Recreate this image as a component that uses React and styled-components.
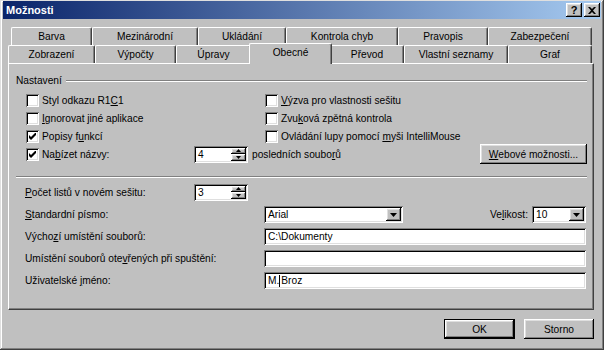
import React from "react";
import styled, { createGlobalStyle, css } from "styled-components";

const GlobalStyle = createGlobalStyle`
  body {
    margin: 0;
    background: #c0c0c0;
    font-family: "Liberation Sans", Arial, sans-serif;
    font-size: 10.2px;
    color: #000;
  }
`;

const raised = css`
  background: #c0c0c0;
  box-shadow: inset -1px -1px #000, inset 1px 1px #fff, inset -2px -2px #808080,
    inset 2px 2px #dfdfdf;
`;

const sunken = css`
  background: #fff;
  box-shadow: inset 1px 1px #808080, inset -1px -1px #fff, inset 2px 2px #000,
    inset -2px -2px #dfdfdf;
`;

const etched = css`
  height: 0;
  border-top: 1px solid #808080;
  border-bottom: 1px solid #fff;
`;

const Window = styled.div`
  width: 604px;
  height: 350px;
  box-sizing: border-box;
  padding: 1px 3px 3px;
  background: #c0c0c0;
  box-shadow: inset -1px -1px #404040, inset 1px 1px #dfdfdf, inset -2px -2px #808080,
    inset 2px 2px #fff;
  display: flex;
  flex-direction: column;
`;

const TitleBar = styled.div`
  height: 18px;
  display: flex;
  align-items: center;
  justify-content: space-between;
  padding: 0 1px 0 3px;
  background: linear-gradient(to right, #0a246a, #a6caf0);
`;

const TitleText = styled.span`
  color: #fff;
  font-weight: bold;
  font-size: 11px;
`;

const CaptionButtons = styled.div`
  display: flex;
  gap: 2px;
`;

const CaptionButton = styled.div`
  ${raised};
  width: 16px;
  height: 14px;
  display: flex;
  align-items: center;
  justify-content: center;
  font-weight: bold;
  font-size: 11px;
  line-height: 1;
`;

const Body = styled.div`
  padding: 8px 7px 0 5px;
`;

const TabRow = styled.div`
  display: flex;
  height: 18px;
  margin-left: ${(p) => p.$indent || 0}px;
`;

const Tab = styled.div`
  width: ${(p) => p.$w}px;
  height: 18px;
  box-sizing: border-box;
  display: flex;
  align-items: center;
  justify-content: center;
  border-top: 1px solid #fff;
  border-left: 1px solid #fff;
  border-right: 1px solid #404040;
  box-shadow: inset -1px 0 #808080;
  border-radius: 2px 2px 0 0;
  background: #c0c0c0;
  white-space: nowrap;
  ${(p) =>
    p.$active &&
    css`
      width: ${p.$w + 4}px;
      height: 21px;
      margin: -2px -2px 0;
      padding-bottom: 3px;
      position: relative;
      z-index: 1;
    `}
`;

const Panel = styled.div`
  height: 247px;
  box-sizing: border-box;
  border-top: 1px solid #fff;
  border-left: 1px solid #fff;
  border-right: 1px solid #404040;
  border-bottom: 1px solid #404040;
  box-shadow: inset -1px -1px #808080;
  padding: 10px 6px 0 7px;
`;

const GroupHeader = styled.div`
  display: flex;
  align-items: center;
  height: 13px;
  gap: 4px;
`;

const GroupLine = styled.div`
  ${etched};
  flex: 1;
`;

const Rule = styled.div`
  ${etched};
  margin-top: 13px;
`;

const CheckGrid = styled.div`
  display: grid;
  grid-template-columns: 239px 1fr;
  grid-auto-rows: 18px;
  margin-top: 4px;
  padding-left: 10px;
`;

const CheckItem = styled.div`
  display: flex;
  align-items: center;
  gap: 3px;
  white-space: nowrap;
  ${(p) => p.$w && `width: ${p.$w}px; flex: none;`}
`;

const Box = styled.div`
  ${sunken};
  width: 13px;
  height: 13px;
  flex: none;
  display: flex;
  align-items: center;
  justify-content: center;
`;

const WideRow = styled.div`
  grid-column: 1 / -1;
  display: flex;
  align-items: center;
`;

const Spacer = styled.div`
  flex: 1;
`;

const Caption = styled.span`
  margin-left: ${(p) => p.$ml || 0}px;
  margin-right: ${(p) => p.$mr || 0}px;
  white-space: nowrap;
`;

const Key = styled.u`
  text-decoration: underline;
`;

const Button = styled.div`
  ${raised};
  width: ${(p) => p.$w}px;
  height: 20px;
  box-sizing: border-box;
  display: flex;
  align-items: center;
  justify-content: center;
  flex: none;
  ${(p) =>
    p.$default &&
    css`
      box-shadow: inset 0 0 0 1px #000, inset -2px -2px #000, inset 2px 2px #fff,
        inset -3px -3px #808080, inset 3px 3px #dfdfdf;
    `}
`;

const Field = styled.div`
  ${sunken};
  width: ${(p) => (p.$w ? `${p.$w}px` : "auto")};
  height: 17px;
  box-sizing: border-box;
  display: flex;
  align-items: center;
  padding-left: 4px;
  flex: none;
  white-space: nowrap;
  overflow: hidden;
`;

const FieldText = styled.span`
  flex: 1;
`;

const DropButton = styled.div`
  ${raised};
  width: 15px;
  height: 13px;
  margin-right: 2px;
  display: flex;
  align-items: center;
  justify-content: center;
  flex: none;
`;

const SpinButtons = styled.div`
  display: flex;
  flex-direction: column;
  margin-right: 2px;
  flex: none;
`;

const SpinButton = styled.div`
  ${raised};
  width: 15px;
  height: 6.5px;
  display: flex;
  align-items: center;
  justify-content: center;
`;

const Form = styled.div`
  padding: 0 1px 0 9px;
  margin-top: 5px;
`;

const FormRow = styled.div`
  display: grid;
  grid-template-columns: ${(p) => p.$label || 239}px 1fr;
  align-items: center;
  height: ${(p) => p.$h || 17}px;
  margin-top: ${(p) => p.$mt || 0}px;
`;

const FieldGroup = styled.div`
  display: flex;
  align-items: center;
`;

const Caret = styled.span`
  display: inline-block;
  width: 1px;
  height: 12px;
  background: #000;
  vertical-align: middle;
  margin: 0 1px 0 0;
`;

const Footer = styled.div`
  display: flex;
  justify-content: flex-end;
  gap: 9px;
  padding-top: 9px;
`;

const Check = () => (
  <svg width="7" height="7" viewBox="0 0 7 7">
    <path d="M0 2 V5 L2 7 L7 2 V-1 L2 4 Z" fill="#000" />
  </svg>
);

const Down = () => (
  <svg width="7" height="4" viewBox="0 0 7 4">
    <path d="M0 0 H7 L3.5 4 Z" fill="#000" />
  </svg>
);

const Tri = ({ up }) => (
  <svg width="5" height="3" viewBox="0 0 5 3">
    <path d={up ? "M0 3 H5 L2.5 0 Z" : "M0 0 H5 L2.5 3 Z"} fill="#000" />
  </svg>
);

function CheckBox({ checked, children, w }) {
  return (
    <CheckItem $w={w}>
      <Box>{checked && <Check />}</Box>
      <span>{children}</span>
    </CheckItem>
  );
}

function Spin({ value }) {
  return (
    <Field $w={54}>
      <FieldText>{value}</FieldText>
      <SpinButtons>
        <SpinButton>
          <Tri up />
        </SpinButton>
        <SpinButton>
          <Tri />
        </SpinButton>
      </SpinButtons>
    </Field>
  );
}

function Combo({ value, w }) {
  return (
    <Field $w={w}>
      <FieldText>{value}</FieldText>
      <DropButton>
        <Down />
      </DropButton>
    </Field>
  );
}

const backTabs = [
  ["Barva", 81],
  ["Mezinárodní", 106],
  ["Ukládání", 88],
  ["Kontrola chyb", 112],
  ["Pravopis", 90],
  ["Zabezpečení", 104],
];

const frontTabs = [
  ["Zobrazení", 87],
  ["Výpočty", 81],
  ["Úpravy", 75],
  ["Obecné", 79],
  ["Převod", 74],
  ["Vlastní seznamy", 104],
  ["Graf", 84],
];

export default function App() {
  return (
    <>
      <GlobalStyle />
      <Window>
        <TitleBar>
          <TitleText>Možnosti</TitleText>
          <CaptionButtons>
            <CaptionButton>?</CaptionButton>
            <CaptionButton>
              <svg width="8" height="7" viewBox="0 0 8 7">
                <path d="M0 0 H2 L4 2 L6 0 H8 L5 3.5 L8 7 H6 L4 5 L2 7 H0 L3 3.5 Z" fill="#000" />
              </svg>
            </CaptionButton>
          </CaptionButtons>
        </TitleBar>

        <Body>
          <TabRow $indent={3}>
            {backTabs.map(([name, w]) => (
              <Tab key={name} $w={w}>
                {name}
              </Tab>
            ))}
          </TabRow>
          <TabRow>
            {frontTabs.map(([name, w]) => (
              <Tab key={name} $w={w} $active={name === "Obecné"}>
                {name}
              </Tab>
            ))}
          </TabRow>

          <Panel>
            <GroupHeader>
              <span>Nastavení</span>
              <GroupLine />
            </GroupHeader>

            <CheckGrid>
              <CheckBox>
                Styl odkazu R1<Key>C</Key>1
              </CheckBox>
              <CheckBox>
                <Key>V</Key>ýzva pro vlastnosti sešitu
              </CheckBox>
              <CheckBox>
                <Key>I</Key>gnorovat jiné aplikace
              </CheckBox>
              <CheckBox>
                Zvu<Key>k</Key>ová zpětná kontrola
              </CheckBox>
              <CheckBox checked>
                Popisy f<Key>u</Key>nkcí
              </CheckBox>
              <CheckBox>
                Ovládání lupy pomocí <Key>m</Key>yši IntelliMouse
              </CheckBox>
              <WideRow>
                <CheckBox checked w={168}>
                  Na<Key>b</Key>ízet názvy:
                </CheckBox>
                <Spin value="4" />
                <Caption $ml={4}>
                  posledních soubo<Key>r</Key>ů
                </Caption>
                <Spacer />
                <Button $w={107}>
                  <span>
                    <Key>W</Key>ebové možnosti...
                  </span>
                </Button>
              </WideRow>
            </CheckGrid>

            <Rule />

            <Form>
              <FormRow $label={169} $h={18}>
                <span>
                  <Key>P</Key>očet listů v novém sešitu:
                </span>
                <FieldGroup>
                  <Spin value="3" />
                </FieldGroup>
              </FormRow>
              <FormRow $mt={5}>
                <span>
                  <Key>S</Key>tandardní písmo:
                </span>
                <FieldGroup>
                  <Combo value="Arial" w={139} />
                  <Spacer />
                  <Caption $mr={4}>
                    Ve<Key>l</Key>ikost:
                  </Caption>
                  <Combo value="10" w={54} />
                </FieldGroup>
              </FormRow>
              <FormRow $mt={5}>
                <span>
                  Výcho<Key>z</Key>í umístění souborů:
                </span>
                <Field>C:\Dokumenty</Field>
              </FormRow>
              <FormRow $mt={5}>
                <span>
                  Umístění souborů ote<Key>v</Key>řených při spuštění:
                </span>
                <Field />
              </FormRow>
              <FormRow $mt={5}>
                <span>
                  Uživatelské <Key>j</Key>méno:
                </span>
                <Field>
                  M.<Caret />Broz
                </Field>
              </FormRow>
            </Form>
          </Panel>

          <Footer>
            <Button $w={71} $default>
              OK
            </Button>
            <Button $w={70}>Storno</Button>
          </Footer>
        </Body>
      </Window>
    </>
  );
}
